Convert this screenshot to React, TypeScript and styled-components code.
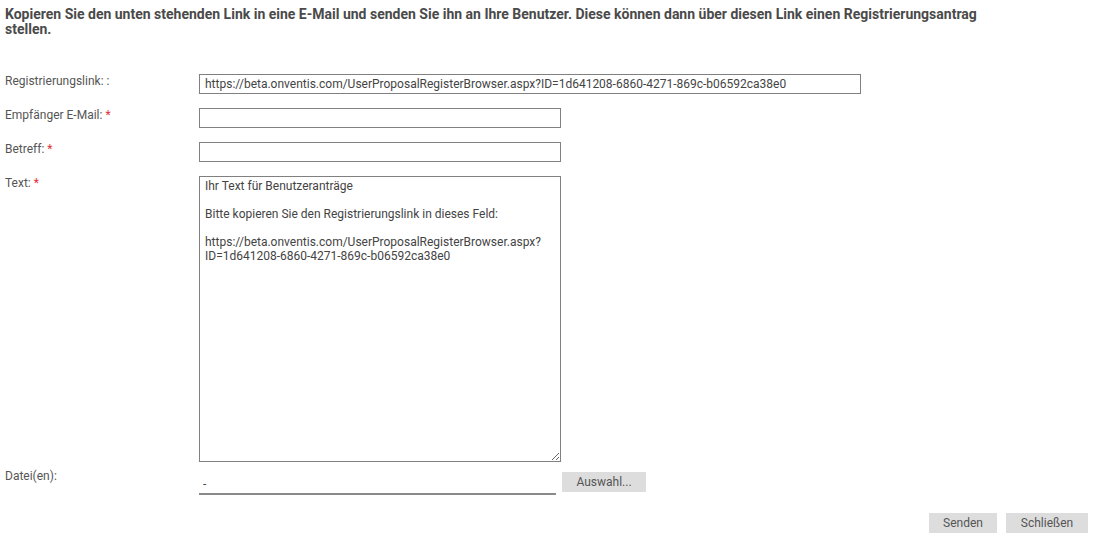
import styled, { createGlobalStyle } from "styled-components";

const registerLink =
  "https://beta.onventis.com/UserProposalRegisterBrowser.aspx?ID=1d641208-6860-4271-869c-b06592ca38e0";

const mailText = `Ihr Text für Benutzeranträge

Bitte kopieren Sie den Registrierungslink in dieses Feld:

https://beta.onventis.com/UserProposalRegisterBrowser.aspx?ID=1d641208-6860-4271-869c-b06592ca38e0`;

const GlobalStyle = createGlobalStyle`
  html, body {
    margin: 0;
    padding: 0;
    background: #fff;
    font-family: Roboto, "Liberation Sans", Arial, sans-serif;
  }
`;

export default function App() {
  return (
    <>
      <GlobalStyle />
      <Page>
        <Intro>
          Kopieren Sie den unten stehenden Link in eine E-Mail und senden Sie
          ihn an Ihre Benutzer. Diese können dann über diesen Link einen
          Registrierungsantrag stellen.
        </Intro>

        <Form>
          <Label>Registrierungslink: :</Label>
          <TextInput $width={662} defaultValue={registerLink} readOnly />

          <Label>
            Empfänger E-Mail: <Req>*</Req>
          </Label>
          <TextInput $width={362} />

          <Label>
            Betreff: <Req>*</Req>
          </Label>
          <TextInput $width={362} />

          <Label>
            Text: <Req>*</Req>
          </Label>
          <TextArea defaultValue={mailText} />

          <Label $offset={-7}>Datei(en):</Label>
          <FileRow>
            <FileField>-</FileField>
            <Button $width={84}>Auswahl...</Button>
          </FileRow>
        </Form>

        <Footer>
          <Button $width={68}>Senden</Button>
          <Button $width={82}>Schließen</Button>
        </Footer>
      </Page>
    </>
  );
}

const Page = styled.div`
  width: 1096px;
  padding: 7px 8px 0 5px;
  box-sizing: border-box;
`;

const Intro = styled.p`
  margin: 0;
  width: 985px;
  font-size: 14px;
  line-height: 15px;
  font-weight: 700;
  color: #4a4a4a;
`;

const Form = styled.div`
  display: grid;
  grid-template-columns: 194px 1fr;
  row-gap: 14px;
  margin-top: 37px;
`;

const Label = styled.div<{ $offset?: number }>`
  font-size: 12px;
  line-height: 14px;
  color: #555;
  margin-top: ${(p) => p.$offset ?? 0}px;
`;

const Req = styled.span`
  color: #e0303a;
`;

const TextInput = styled.input<{ $width: number }>`
  width: ${(p) => p.$width}px;
  height: 20px;
  box-sizing: border-box;
  border: 1px solid #808080;
  padding: 0 5px;
  margin: 0;
  font-family: Roboto, "Liberation Sans", Arial, sans-serif;
  font-size: 12px;
  color: #444;
  outline: none;
`;

const TextArea = styled.textarea`
  width: 362px;
  height: 286px;
  box-sizing: border-box;
  border: 1px solid #808080;
  padding: 2px 5px;
  margin: 0;
  font-family: Roboto, "Liberation Sans", Arial, sans-serif;
  font-size: 12px;
  line-height: 14px;
  color: #444;
  outline: none;
  display: block;
`;

const FileRow = styled.div`
  display: flex;
  align-items: flex-start;
  gap: 6px;
  margin-top: -4px;
`;

const FileField = styled.div`
  width: 357px;
  height: 23px;
  box-sizing: border-box;
  border-bottom: 2px solid #8a8a8a;
  padding: 5px 0 0 4px;
  font-size: 12px;
  line-height: 14px;
  color: #444;
`;

const Button = styled.button<{ $width: number }>`
  width: ${(p) => p.$width}px;
  height: 20px;
  margin: 0;
  padding: 0;
  border: none;
  background: #dddddd;
  font-family: Roboto, "Liberation Sans", Arial, sans-serif;
  font-size: 12px;
  color: #555;
`;

const Footer = styled.div`
  display: flex;
  justify-content: flex-end;
  gap: 9px;
  margin-top: 18px;
`;
